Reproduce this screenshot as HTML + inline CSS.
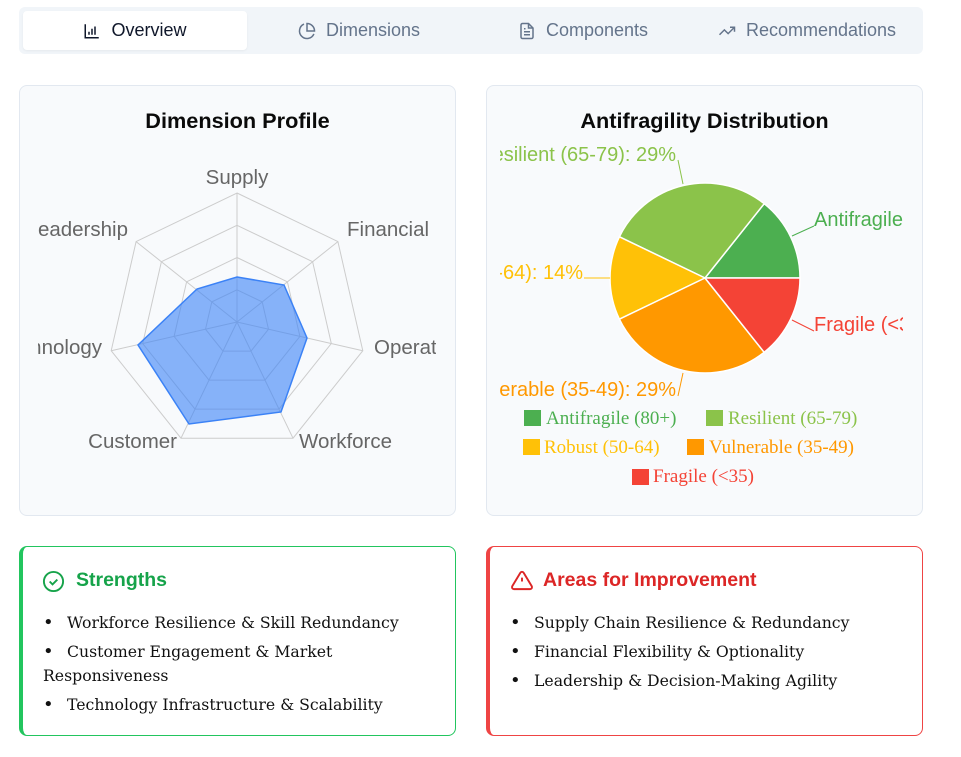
<!DOCTYPE html>
<html><head><meta charset="utf-8"><style>
*{box-sizing:border-box;margin:0;padding:0}
body{width:961px;height:757px;background:#fff;font-family:"Liberation Sans",sans-serif;position:relative;overflow:hidden}
.tabs{position:absolute;left:19px;top:7px;width:904px;height:47px;background:#f1f5f9;border-radius:6px}
.tab{position:absolute;top:4px;height:39px;line-height:39px;font-size:18px;color:#64748b;display:flex;align-items:center;justify-content:center;gap:10px}
.tab.active{background:#fff;color:#0f172a;border-radius:4px;box-shadow:0 1px 2px rgba(0,0,0,.05)}
.card{position:absolute;top:85px;height:431px;width:437px;background:#f8fafc;border:1px solid #e2e8f0;border-radius:8px;overflow:hidden}
.card h2{position:absolute;top:22px;left:0;right:0;text-align:center;font-size:21.7px;font-weight:bold;color:#0a0a0a}
.box{position:absolute;top:546px;height:190px;width:437px;border-radius:8px;background:#fff}
.box h3{position:absolute;top:22px;left:53px;font-size:19.5px;font-weight:bold}
.box ul{position:absolute;top:64px;left:20px;right:20px;list-style:none;font-family:"DejaVu Serif",serif;font-size:15.7px;color:#111;line-height:24px}
.box li{margin-bottom:5px}
.box li::before{content:"•";display:inline-block;width:24px;font-size:18px}
</style></head><body>
<div class="tabs">
 <div class="tab active" style="left:4px;width:224px"><svg width="18" height="18" viewBox="0 0 24 24" fill="none" stroke="#0f172a" stroke-width="2"><path d="M3 3v18h18"/><path d="M8 17V13M12 17V9M16 17V6"/></svg>Overview</div>
 <div class="tab" style="left:228px;width:224px"><svg width="18" height="18" viewBox="0 0 24 24" fill="none" stroke="#64748b" stroke-width="2"><path d="M21.2 15.9A10 10 0 1 1 8 2.8"/><path d="M22 12A10 10 0 0 0 12 2v10z"/></svg>Dimensions</div>
 <div class="tab" style="left:452px;width:224px"><svg width="18" height="18" viewBox="0 0 24 24" fill="none" stroke="#64748b" stroke-width="2"><path d="M14 2H6a2 2 0 0 0-2 2v16a2 2 0 0 0 2 2h12a2 2 0 0 0 2-2V8z"/><path d="M14 2v6h6M16 13H8M16 17H8M10 9H8"/></svg>Components</div>
 <div class="tab" style="left:676px;width:224px"><svg width="18" height="18" viewBox="0 0 24 24" fill="none" stroke="#64748b" stroke-width="2"><path d="M22 7l-8.5 8.5-5-5L2 17"/><path d="M16 7h6v6"/></svg>Recommendations</div>
</div>

<div class="card" style="left:19px"><h2>Dimension Profile</h2></div>
<div class="card" style="left:486px"><h2>Antifragility Distribution</h2></div>

<svg style="position:absolute;left:0;top:0" width="961" height="757">
<defs><clipPath id="c1"><rect x="38" y="140" width="398" height="330"/></clipPath><clipPath id="c2"><rect x="500" y="140" width="403" height="260"/></clipPath></defs>
<g fill="none" stroke="#cccccc" stroke-width="1">
<polygon points="237,193 337.9,241.6 362.8,350.7 293,438.2 181,438.2 111.2,350.7 136.1,241.6"/>
<polygon points="237,225.3 312.6,261.7 331.3,343.5 279,409.1 195,409.1 142.7,343.5 161.4,261.7"/>
<polygon points="237,257.5 287.4,281.8 299.9,336.4 265,380.1 209,380.1 174.1,336.4 186.6,281.8"/>
<polygon points="237,289.8 262.2,301.9 268.5,329.2 251,351.1 223,351.1 205.5,329.2 211.8,301.9"/>
<path d="M237,322L237,193M237,322L337.9,241.6M237,322L362.8,350.7M237,322L293,438.2M237,322L181,438.2M237,322L111.2,350.7M237,322L136.1,241.6"/>
</g>
<polygon points="237,277 284,285 307,338 281,412 189,424 138,345 197,289" fill="rgba(59,130,246,0.6)" stroke="#3b82f6" stroke-width="1.5"/>
<g clip-path="url(#c1)" font-size="20.5" fill="#666" font-family="Liberation Sans,sans-serif">
<text x="237" y="184" text-anchor="middle">Supply</text>
<text x="347" y="236">Financial</text>
<text x="374" y="354">Operations</text>
<text x="299" y="448">Workforce</text>
<text x="177" y="448" text-anchor="end">Customer</text>
<text x="102" y="354" text-anchor="end">Technology</text>
<text x="128" y="236" text-anchor="end">Leadership</text>
</g>
<g stroke="#fff" stroke-width="1.5">
<path d="M705,278L800,278A95,95 0 0 0 764.2,203.7Z" fill="#4CAF50"/>
<path d="M705,278L764.2,203.7A95,95 0 0 0 619.4,236.8Z" fill="#8BC34A"/>
<path d="M705,278L619.4,236.8A95,95 0 0 0 619.4,319.2Z" fill="#FFC107"/>
<path d="M705,278L619.4,319.2A95,95 0 0 0 764.2,352.3Z" fill="#FF9800"/>
<path d="M705,278L764.2,352.3A95,95 0 0 0 800,278Z" fill="#F44336"/>
</g>
<g fill="none" stroke-width="1">
<path d="M683,184L678,160" stroke="#8BC34A"/>
<path d="M792,236L814,226" stroke="#4CAF50"/>
<path d="M610,278L584,278" stroke="#FFC107"/>
<path d="M683,373L678,396" stroke="#FF9800"/>
<path d="M792,320L814,331" stroke="#F44336"/>
</g>
<g clip-path="url(#c2)" font-size="20" font-family="Liberation Sans,sans-serif">
<text x="676" y="161" text-anchor="end" fill="#8BC34A">Resilient (65-79): 29%</text>
<text x="814" y="226" fill="#4CAF50">Antifragile (80+): 14%</text>
<text x="583" y="279" text-anchor="end" fill="#FFC107">Robust (50-64): 14%</text>
<text x="676" y="396" text-anchor="end" fill="#FF9800">Vulnerable (35-49): 29%</text>
<text x="814" y="331" fill="#F44336">Fragile (&lt;35): 14%</text>
</g>
<g font-size="19" font-family="Liberation Serif,serif">
<rect x="524" y="410" width="17" height="16" fill="#4CAF50"/><text x="546" y="424" fill="#4CAF50">Antifragile (80+)</text>
<rect x="706" y="410" width="17" height="16" fill="#8BC34A"/><text x="728" y="424" fill="#8BC34A">Resilient (65-79)</text>
<rect x="523" y="439" width="17" height="16" fill="#FFC107"/><text x="544" y="453" fill="#FFC107">Robust (50-64)</text>
<rect x="687" y="439" width="17" height="16" fill="#FF9800"/><text x="709" y="453" fill="#FF9800">Vulnerable (35-49)</text>
<rect x="632" y="469" width="17" height="16" fill="#F44336"/><text x="653" y="482" fill="#F44336">Fragile (&lt;35)</text>
</g>
</svg>

<div class="box" style="left:19px;border:1px solid #22c55e;border-left:4px solid #22c55e">
 <svg style="position:absolute;left:19px;top:23px" width="23" height="23" viewBox="0 0 24 24" fill="none" stroke="#16a34a" stroke-width="2"><circle cx="12" cy="12" r="10"/><path d="M8 12l3 3 5-5"/></svg>
 <h3 style="color:#16a34a">Strengths</h3>
 <ul><li>Workforce Resilience &amp; Skill Redundancy</li><li>Customer Engagement &amp; Market Responsiveness</li><li>Technology Infrastructure &amp; Scalability</li></ul>
</div>
<div class="box" style="left:486px;border:1px solid #ef4444;border-left:4px solid #ef4444">
 <svg style="position:absolute;left:20px;top:22px" width="24" height="23" viewBox="0 0 24 24" fill="none" stroke="#dc2626" stroke-width="2"><path d="M10.3 3.9L1.8 18a2 2 0 0 0 1.7 3h17a2 2 0 0 0 1.7-3L13.7 3.9a2 2 0 0 0-3.4 0z"/><path d="M12 9v4M12 17h.01"/></svg>
 <h3 style="color:#dc2626">Areas for Improvement</h3>
 <ul><li>Supply Chain Resilience &amp; Redundancy</li><li>Financial Flexibility &amp; Optionality</li><li>Leadership &amp; Decision-Making Agility</li></ul>
</div>
</body></html>
